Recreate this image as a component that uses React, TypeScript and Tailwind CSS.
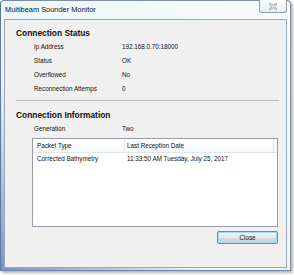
import React from "react";

function Row({ label, value }: { label: string; value: string }) {
  return (
    <div className="h-[14px] flex items-center pl-[29px] text-[6.3px] leading-[8px] text-[#111]">
      <div className="w-[88px] shrink-0">{label}</div>
      <div>{value}</div>
    </div>
  );
}

export default function App() {
  return (
    <div
      className="w-[294px] h-[275px] bg-white overflow-hidden"
      style={{ fontFamily: '"Liberation Sans", Arial, sans-serif' }}
    >
      <div className="w-[291px] h-[271px] flex flex-col rounded-t-[4px] border border-[#7f8fa2] border-l-[#5d79a8] border-b-[#6f86ad] bg-[linear-gradient(to_bottom_left,#f7fcfe_0%,#eaf5f9_65%,#7a95c4_100%)] shadow-[2px_2px_3px_rgba(0,0,0,0.3)]">
        <div className="h-[18px] shrink-0 flex items-start">
          <div className="pl-[4px] pt-[4px] text-[7.4px] leading-[10px] text-[#111] whitespace-nowrap">
            Multibeam Sounder Monitor
          </div>
          <div className="ml-auto mr-[3px] -mt-[1px] w-[28px] h-[13px] rounded-b-[3px] border border-t-0 border-[#8d9cad] bg-[linear-gradient(to_bottom,#fbfdfe,#e7eff4)] flex items-center justify-center">
            <svg width="8" height="7" viewBox="0 0 8 7">
              <path d="M1 0.8 L7 6.2 M7 0.8 L1 6.2" stroke="#9aa3ad" strokeWidth="2.4" strokeLinecap="square" />
              <path d="M1 0.8 L7 6.2 M7 0.8 L1 6.2" stroke="#ffffff" strokeWidth="1" strokeLinecap="square" />
            </svg>
          </div>
        </div>
        <div className="flex-1 mx-[3px] mb-[2px] border border-[#9aa8b6] bg-[#f0f0f0] flex flex-col pt-[6px]">
          <div className="h-[14px] flex items-center pl-[11px] text-[8.4px] leading-[10px] font-bold text-[#111]">
            Connection Status
          </div>
          <Row label="Ip Address" value="192.168.0.70:18000" />
          <Row label="Status" value="OK" />
          <Row label="Overflowed" value="No" />
          <Row label="Reconnection Attemps" value="0" />
          <div className="mt-[4px] ml-[11px] mr-[7px] h-px bg-[#bcbcbc]" />
          <div className="mt-[7px] h-[14px] flex items-center pl-[11px] text-[8.4px] leading-[10px] font-bold text-[#111]">
            Connection Information
          </div>
          <Row label="Generation" value="Two" />
          <div className="mt-[2px] ml-[27px] w-[246px] h-[89px] border border-[#9a9ca8] bg-white flex flex-col text-[6.3px] leading-[8px] text-[#111]">
            <div className="h-[14px] flex border-b border-[#e3e5e8] bg-[linear-gradient(to_bottom,#ffffff,#f6f7f9)]">
              <div className="w-[92px] pl-[4px] flex items-center border-r border-[#e3e5e8]">Packet Type</div>
              <div className="w-[149px] pl-[2px] flex items-center border-r border-[#e3e5e8]">Last Reception Date</div>
            </div>
            <div className="h-[12px] flex items-center">
              <div className="w-[92px] pl-[4px]">Corrected Bathymetry</div>
              <div className="pl-[2px] whitespace-nowrap">11:33:50 AM Tuesday, July 25, 2017</div>
            </div>
          </div>
          <div className="mt-[4px] self-end mr-[8px] w-[61px] h-[13px] rounded-[2px] border border-[#3c9bd0] shadow-[inset_0_0_0_1px_#9fdcf6] bg-[linear-gradient(to_bottom,#f4f4f4_0%,#e9e9e9_50%,#dadada_51%,#cfcfcf_100%)] flex items-center justify-center text-[6.3px] leading-[8px] text-[#111]">
            Close
          </div>
        </div>
      </div>
    </div>
  );
}
